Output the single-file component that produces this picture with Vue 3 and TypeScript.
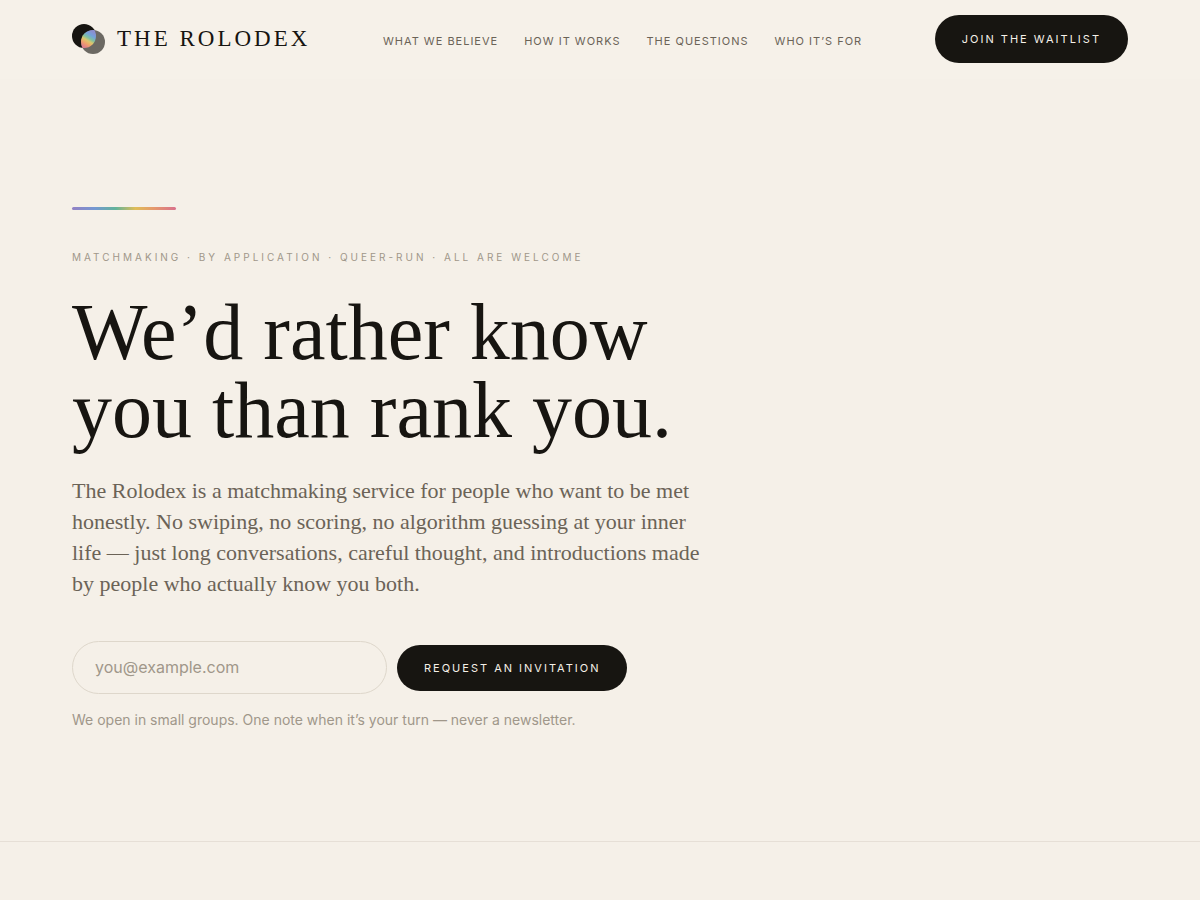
<script setup lang="ts">
import { ref } from 'vue'

interface NavLink {
  label: string
  href: string
}

const links: NavLink[] = [
  { label: 'What we believe', href: '#believe' },
  { label: 'How it works', href: '#how' },
  { label: 'The questions', href: '#questions' },
  { label: 'Who it’s for', href: '#who' },
]

const email = ref('')
</script>

<template>
  <header class="site-header">
    <a class="brand" href="#top">
      <svg class="mark" viewBox="0 0 33 30" aria-hidden="true">
        <defs>
          <linearGradient id="lens" gradientUnits="userSpaceOnUse" x1="21" y1="8" x2="12" y2="23">
            <stop offset="0" stop-color="#8b8fd0" />
            <stop offset="0.22" stop-color="#74a3da" />
            <stop offset="0.42" stop-color="#7fc0a0" />
            <stop offset="0.58" stop-color="#d9c86c" />
            <stop offset="0.76" stop-color="#eea36b" />
            <stop offset="1" stop-color="#df7d8c" />
          </linearGradient>
          <clipPath id="first"><circle cx="12" cy="12" r="12" /></clipPath>
        </defs>
        <circle cx="12" cy="12" r="12" fill="#171511" />
        <circle cx="21" cy="18" r="12" fill="#6c6963" />
        <circle cx="21" cy="18" r="12" fill="url(#lens)" clip-path="url(#first)" />
      </svg>
      <span>THE ROLODEX</span>
    </a>
    <nav class="nav" aria-label="Main">
      <a v-for="link in links" :key="link.href" :href="link.href">{{ link.label }}</a>
    </nav>
    <a class="pill join" href="#waitlist">Join the waitlist</a>
  </header>

  <main id="top" class="hero">
    <div class="rainbow"></div>
    <p class="eyebrow">Matchmaking · By application · Queer-run · All are welcome</p>
    <h1>We’d rather know you than rank you.</h1>
    <p class="lede">
      The Rolodex is a matchmaking service for people who want to be met honestly. No swiping, no
      scoring, no algorithm guessing at your inner life — just long conversations, careful thought,
      and introductions made by people who actually know you both.
    </p>
    <form id="waitlist" class="signup" @submit.prevent>
      <input v-model="email" type="email" placeholder="you@example.com" aria-label="Email address" />
      <button class="pill" type="submit">Request an invitation</button>
    </form>
    <p class="note">We open in small groups. One note when it’s your turn — never a newsletter.</p>
  </main>
</template>

<style>
body {
  margin: 0;
  background: #f5f0e8;
}
</style>

<style scoped>
.site-header,
.hero {
  padding-left: 72px;
  padding-right: 72px;
  font-family: Inter, 'Liberation Sans', sans-serif;
}

.site-header {
  display: flex;
  align-items: center;
  justify-content: space-between;
  padding-top: 15px;
  padding-bottom: 16px;
  background: #f6f1e9;
}

.brand {
  display: flex;
  align-items: center;
  gap: 12px;
  color: #171511;
  font-family: 'Liberation Serif', serif;
  font-size: 23px;
  line-height: 30px;
  letter-spacing: 3px;
  text-decoration: none;
  white-space: nowrap;
}

.mark {
  width: 33px;
  height: 30px;
}

.nav {
  display: flex;
  gap: 26px;
  padding-top: 4px;
}

.nav a {
  color: #6b6357;
  font-size: 11px;
  line-height: 20px;
  letter-spacing: 1px;
  text-decoration: none;
  text-transform: uppercase;
  white-space: nowrap;
}

.pill {
  box-sizing: border-box;
  padding: 13px 27px;
  border: 0;
  border-radius: 24px;
  background: #171511;
  color: #f5f0e8;
  font-family: inherit;
  font-size: 11px;
  line-height: 20px;
  letter-spacing: 2px;
  text-decoration: none;
  text-transform: uppercase;
  white-space: nowrap;
}

.join {
  padding-top: 14px;
  padding-bottom: 14px;
}

.hero {
  padding-top: 128px;
  padding-bottom: 111px;
  border-bottom: 1px solid #e6dfd6;
}

.rainbow {
  width: 104px;
  height: 3px;
  border-radius: 2px;
  background: linear-gradient(90deg, #9381c4, #7498d2 22%, #62b39a 42%, #dfbd58 61%, #e59a6c 78%, #d9718c);
}

.eyebrow {
  margin: 37px 0 0;
  color: #a0978a;
  font-size: 10px;
  line-height: 20px;
  letter-spacing: 3px;
  text-transform: uppercase;
}

h1 {
  max-width: 680px;
  margin: 26px 0 0;
  color: #171511;
  font-family: 'Liberation Serif', serif;
  font-size: 80px;
  font-weight: 400;
  line-height: 78px;
}

.lede {
  max-width: 630px;
  margin: 26px 0 0;
  color: #6b6357;
  font-family: 'Liberation Serif', serif;
  font-size: 22px;
  line-height: 31px;
}

.signup {
  display: flex;
  align-items: center;
  gap: 10px;
  margin-top: 42px;
}

.signup input {
  box-sizing: border-box;
  width: 315px;
  padding: 15px 22px;
  border: 1px solid #ded7cb;
  border-radius: 27px;
  background: transparent;
  color: #171511;
  font-family: inherit;
  font-size: 16px;
  line-height: 21px;
}

.signup input::placeholder {
  color: #a0978a;
  opacity: 1;
}

.note {
  margin: 16px 0 0;
  color: #a0978a;
  font-size: 14px;
  line-height: 20px;
}
</style>
